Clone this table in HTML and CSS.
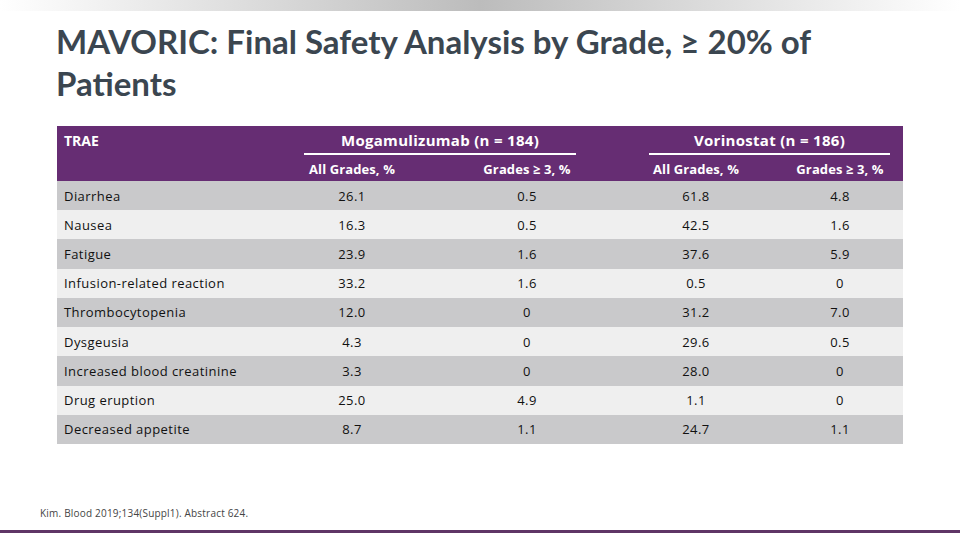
FILE: index.html
```html
<!DOCTYPE html>
<html lang="en">
<head>
<meta charset="utf-8">
<title>MAVORIC Safety</title>
<link rel="stylesheet" href="styles.css">
</head>
<body>
<div class="slide">
  <div class="topbar"></div>
  <h1 class="title">MAVORIC: Final Safety Analysis by Grade, ≥ 20% of Patients</h1>
  <div class="table">
    <div class="head trae">TRAE</div>
    <div class="head group g-mog"><span class="group-label">Mogamulizumab (n = 184)</span></div>
    <div class="head group g-vor"><span class="group-label">Vorinostat (n = 186)</span></div>
    <div class="head sub">All Grades, %</div>
    <div class="head sub">Grades ≥ 3, %</div>
    <div class="head sub">All Grades, %</div>
    <div class="head sub">Grades ≥ 3, %</div>

    <div class="cell lbl dark">Diarrhea</div><div class="cell dark">26.1</div><div class="cell dark">0.5</div><div class="cell dark">61.8</div><div class="cell dark">4.8</div>
    <div class="cell lbl light">Nausea</div><div class="cell light">16.3</div><div class="cell light">0.5</div><div class="cell light">42.5</div><div class="cell light">1.6</div>
    <div class="cell lbl dark">Fatigue</div><div class="cell dark">23.9</div><div class="cell dark">1.6</div><div class="cell dark">37.6</div><div class="cell dark">5.9</div>
    <div class="cell lbl light">Infusion-related reaction</div><div class="cell light">33.2</div><div class="cell light">1.6</div><div class="cell light">0.5</div><div class="cell light">0</div>
    <div class="cell lbl dark">Thrombocytopenia</div><div class="cell dark">12.0</div><div class="cell dark">0</div><div class="cell dark">31.2</div><div class="cell dark">7.0</div>
    <div class="cell lbl light">Dysgeusia</div><div class="cell light">4.3</div><div class="cell light">0</div><div class="cell light">29.6</div><div class="cell light">0.5</div>
    <div class="cell lbl dark">Increased blood creatinine</div><div class="cell dark">3.3</div><div class="cell dark">0</div><div class="cell dark">28.0</div><div class="cell dark">0</div>
    <div class="cell lbl light">Drug eruption</div><div class="cell light">25.0</div><div class="cell light">4.9</div><div class="cell light">1.1</div><div class="cell light">0</div>
    <div class="cell lbl dark">Decreased appetite</div><div class="cell dark">8.7</div><div class="cell dark">1.1</div><div class="cell dark">24.7</div><div class="cell dark">1.1</div>
  </div>
  <p class="footnote">Kim. Blood 2019;134(Suppl1). Abstract 624.</p>
  <div class="bottombar"></div>
</div>
</body>
</html>
```
FILE: styles.css
```css
* { box-sizing: border-box; }
html, body { margin: 0; padding: 0; background: #fff; }
.slide {
  width: 960px;
  height: 540px;
  overflow: hidden;
  display: flex;
  flex-direction: column;
  font-family: "Open Sans", "Liberation Sans", sans-serif;
}
.topbar {
  height: 11px;
  background: linear-gradient(to right, #ffffff 0%, #bcbcbc 50%, #ffffff 100%);
}
.title {
  margin: 9px 0 0 56px;
  width: 820px;
  font-family: Lato, "Liberation Sans", sans-serif;
  font-weight: 700;
  font-size: 33px;
  line-height: 42px;
  color: #3b4650;
}
.table {
  margin: 22px 0 0 57px;
  width: 846px;
  display: grid;
  grid-template-columns: 208px 174px 176px 162px 126px;
  grid-template-rows: 29px 26px;
  grid-auto-rows: 29.22px;
  font-size: 13px;
  letter-spacing: 0.45px;
  color: #111;
}
.head {
  background: #662d73;
  color: #fff;
  font-weight: 700;
  font-size: 14px;
  letter-spacing: 0;
  display: flex;
  align-items: center;
  justify-content: center;
}
.trae {
  grid-row: 1 / span 2;
  justify-content: flex-start;
  align-items: flex-start;
  padding: 5px 0 0 7px;
}
.group { align-items: stretch; }
.group-label {
  flex: 1;
  display: flex;
  align-items: center;
  justify-content: center;
  border-bottom: 2px solid #fff;
  font-size: 15px;
  letter-spacing: 0.3px;
}
.g-mog { grid-column: 2 / span 2; padding: 0 39px; }
.g-vor { grid-column: 4 / span 2; padding: 0 13px 0 34px; }
.sub { font-size: 13px; padding-top: 1px; letter-spacing: 0.1px; }
.cell {
  display: flex;
  align-items: center;
  justify-content: center;
}
.lbl { justify-content: flex-start; padding-left: 7px; }
.dark { background: #c9c9cb; }
.light { background: #efefef; }
.footnote {
  margin: auto 0 0 40px;
  font-size: 10px;
  letter-spacing: 0.2px;
  color: #444;
}
.bottombar {
  margin-top: 10px;
  margin-bottom: 7px;
  height: 3px;
  background: #5f3566;
}
```
